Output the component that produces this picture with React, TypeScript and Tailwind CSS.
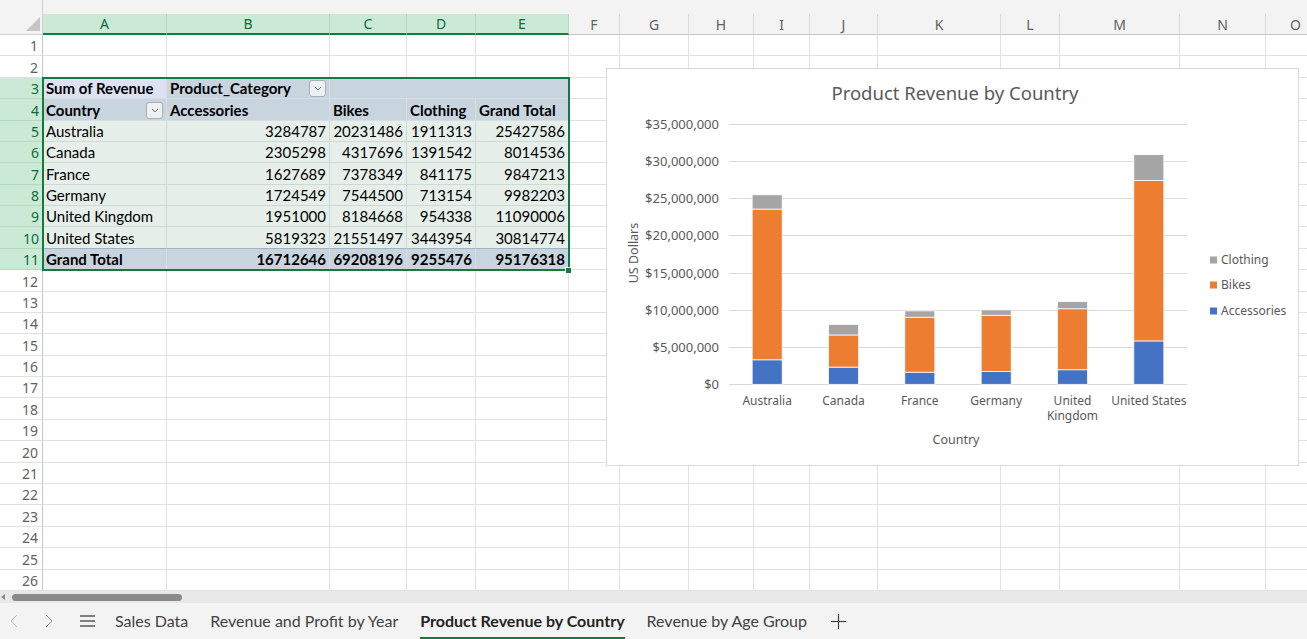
import React from 'react';

const COLS = [
  { k: 'A', w: 'w-[124px]', sel: true },
  { k: 'B', w: 'w-[163px]', sel: true },
  { k: 'C', w: 'w-[77px]', sel: true },
  { k: 'D', w: 'w-[69px]', sel: true },
  { k: 'E', w: 'w-[93px]', sel: true },
  { k: 'F', w: 'w-[51px]', sel: false },
  { k: 'G', w: 'w-[69px]', sel: false },
  { k: 'H', w: 'w-[65px]', sel: false },
  { k: 'I', w: 'w-[56px]', sel: false },
  { k: 'J', w: 'w-[68px]', sel: false },
  { k: 'K', w: 'w-[123px]', sel: false },
  { k: 'L', w: 'w-[59px]', sel: false },
  { k: 'M', w: 'w-[120px]', sel: false },
  { k: 'N', w: 'w-[86px]', sel: false },
  { k: 'O', w: 'w-[60px]', sel: false },
];

const DATA = [
  { name: ['Australia'], a: 3284787, b: 20231486, c: 1911313 },
  { name: ['Canada'], a: 2305298, b: 4317696, c: 1391542 },
  { name: ['France'], a: 1627689, b: 7378349, c: 841175 },
  { name: ['Germany'], a: 1724549, b: 7544500, c: 713154 },
  { name: ['United', 'Kingdom'], a: 1951000, b: 8184668, c: 954338 },
  { name: ['United States'], a: 5819323, b: 21551497, c: 3443954 },
];

const COUNTRY_ROWS = ['Australia', 'Canada', 'France', 'Germany', 'United Kingdom', 'United States'];

const cellFont = { fontFamily: 'Lato, "Liberation Sans", sans-serif' };
const uiFont = { fontFamily: '"Noto Sans", "Open Sans", sans-serif' };

const rowTop = (i: number) => Math.round(35 + i * 21.38);

const Dropdown = () => (
  <div className="w-[17px] h-[17px] shrink-0 mb-[1px] rounded-[3px] border border-[#a9b0b5] bg-[#eef1f3] flex items-center justify-center">
    <svg width="8" height="5" viewBox="0 0 8 5">
      <polyline points="1,1 4,4 7,1" fill="none" stroke="#707070" strokeWidth="1" />
    </svg>
  </div>
);

type Cell = { text?: string; bold?: boolean; right?: boolean; bg?: string; border?: string; drop?: boolean };

function pivotCell(r: number, c: number): Cell | null {
  if (c > 4 || r < 3 || r > 11) return null;
  const head = 'bg-[#c8d5df]';
  const hb = 'border-[#d6dee4]';
  if (r === 3) {
    if (c === 0) return { text: 'Sum of Revenue', bold: true, bg: 'bg-[#dde2f3]', border: hb };
    if (c === 1) return { text: 'Product_Category', bold: true, bg: head, border: hb, drop: true };
    return { bg: head, border: 'border-r-[#c8d5df] border-b-[#d6dee4]' };
  }
  if (r === 4) {
    const t = ['Country', 'Accessories', 'Bikes', 'Clothing', 'Grand Total'][c];
    return { text: t, bold: true, bg: head, border: hb, drop: c === 0 };
  }
  if (r === 11) {
    const t = ['Grand Total', '16712646', '69208196', '9255476', '95176318'][c];
    return { text: t, bold: true, right: c > 0, bg: head, border: 'border-[#d6dee4]' };
  }
  const d = DATA[r - 5];
  const vals = [COUNTRY_ROWS[r - 5], String(d.a), String(d.b), String(d.c), String(d.a + d.b + d.c)];
  return {
    text: vals[c],
    right: c > 0,
    bg: 'bg-[#e6efe9]',
    border: r === 10 ? 'border-r-[#d0d8d3] border-b-[#9fb3c3]' : 'border-[#d0d8d3]',
  };
}

const HeaderRow = () => (
  <div className="flex h-[21px] shrink-0" style={uiFont}>
    <div className="w-[43px] shrink-0 bg-[#f3f3f3] border-r border-b border-[#d0d0d0] relative">
      <svg className="absolute left-0 top-0" width="43" height="21">
        <polygon points="40,3 40,17 26,17" fill="#c6c6c6" />
      </svg>
    </div>
    {COLS.map((col) => (
      <div
        key={col.k}
        className={`${col.w} shrink-0 flex items-center justify-center text-[14px] border-r ${
          col.sel
            ? 'bg-[#caead6] text-[#0f6b38] border-r-[#b5d8c1] border-b-2 border-b-[#107c41]'
            : 'bg-[#f3f3f3] text-[#616161] border-r-[#dadada] border-b border-b-[#c6c6c6]'
        }`}
      >
        {col.k}
      </div>
    ))}
  </div>
);

const Grid = () => {
  const rows = Array.from({ length: 26 }, (_, i) => i + 1);
  return (
    <div className="relative h-[556px] shrink-0 overflow-hidden">
      {rows.map((r) => {
        const h = rowTop(r) - rowTop(r - 1) === 22 ? 'h-[22px]' : 'h-[21px]';
        const sel = r >= 3 && r <= 11;
        return (
          <div key={r} className={`flex ${h}`}>
            <div
              className={`w-[43px] shrink-0 flex items-center justify-end pr-[4px] pt-[1px] text-[14px] border-b ${
                sel
                  ? 'bg-[#caead6] text-[#0f6b38] border-b-[#b5d8c1]'
                  : 'bg-white text-[#616161] border-r border-r-[#c6c6c6] border-b-[#e1e1e1]'
              }`}
              style={uiFont}
            >
              {r}
            </div>
            {COLS.map((col, c) => {
              const p = pivotCell(r, c);
              if (!p) {
                return <div key={col.k} className={`${col.w} shrink-0 border-r border-b border-[#e1e1e1] bg-white`} />;
              }
              return (
                <div
                  key={col.k}
                  className={`${col.w} shrink-0 flex items-end gap-1 px-[3px] whitespace-nowrap overflow-hidden border-r border-b text-[15px] leading-[19px] text-black ${
                    p.bg
                  } ${p.border} ${p.right ? 'justify-end' : 'justify-between'} ${p.bold ? 'font-bold' : ''}`}
                  style={cellFont}
                >
                  <span>{p.text}</span>
                  {p.drop && <Dropdown />}
                </div>
              );
            })}
          </div>
        );
      })}
      {/* selection outline A3:E11 */}
      <div className="absolute left-[42px] top-[42px] w-[528px] h-[194px] border-2 border-[#107c41] pointer-events-none" />
      <div className="absolute left-[565px] top-[232px] w-[7px] h-[7px] bg-[#107c41] border border-white" />
    </div>
  );
};

const Chart = () => {
  const x0 = 123;
  const x1 = 581;
  const y0 = 316.3;
  const per = 260.8 / 35000000;
  const cw = (x1 - x0) / 6;
  const ticks = [0, 5, 10, 15, 20, 25, 30, 35];
  const font = '"Noto Sans", "Open Sans", sans-serif';
  return (
    <div className="absolute left-[606px] top-[68px] w-[693px] h-[398px] bg-white border border-[#d9d9d9]">
      <svg width="691" height="396" className="block">
        <g transform="translate(-1,-1)">
          <text x="349" y="32" textAnchor="middle" fontSize="18.5" fill="#595959" fontFamily={font}>
            Product Revenue by Country
          </text>
          {ticks.map((t) => {
            const y = Math.round(y0 - t * 1000000 * per) + 0.5;
            return (
              <g key={t}>
                <line x1={x0} x2={x1} y1={y} y2={y} stroke="#d9d9d9" strokeWidth="1" />
                <text x="113" y={y + 4.5} textAnchor="end" fontSize="13" fill="#595959" fontFamily={font}>
                  {t === 0 ? '$0' : `$${t},000,000`}
                </text>
              </g>
            );
          })}
          {DATA.map((d, i) => {
            const cx = x0 + cw * (i + 0.5);
            const bx = cx - 15;
            const ha = d.a * per;
            const hb = d.b * per;
            const hc = d.c * per;
            return (
              <g key={i}>
                <rect x={bx} y={y0 - ha} width="30" height={ha} fill="#4472c4" stroke="#ffffff" strokeWidth="0.75" />
                <rect x={bx} y={y0 - ha - hb} width="30" height={hb} fill="#ed7d31" stroke="#ffffff" strokeWidth="0.75" />
                <rect x={bx} y={y0 - ha - hb - hc} width="30" height={hc} fill="#a5a5a5" stroke="#ffffff" strokeWidth="0.75" />
                {d.name.map((n, j) => (
                  <text key={n} x={cx} y={337 + j * 15} textAnchor="middle" fontSize="12" fill="#595959" fontFamily={font}>
                    {n}
                  </text>
                ))}
              </g>
            );
          })}
          <text x="350" y="376" textAnchor="middle" fontSize="12.5" fill="#595959" fontFamily={font}>
            Country
          </text>
          <text
            x="32"
            y="185"
            textAnchor="middle"
            fontSize="12.5"
            fill="#595959"
            fontFamily={font}
            transform="rotate(-90 32 185)"
          >
            US Dollars
          </text>
          {[
            { t: 'Clothing', c: '#a5a5a5', y: 192 },
            { t: 'Bikes', c: '#ed7d31', y: 217 },
            { t: 'Accessories', c: '#4472c4', y: 243 },
          ].map((l) => (
            <g key={l.t}>
              <rect x="604" y={l.y - 3.5} width="7" height="7" fill={l.c} />
              <text x="615" y={l.y + 4} fontSize="12" fill="#595959" fontFamily={font}>
                {l.t}
              </text>
            </g>
          ))}
        </g>
      </svg>
    </div>
  );
};

const ScrollBar = () => (
  <div className="h-[12px] shrink-0 bg-[#e8e8e8] flex items-center">
    <svg width="10" height="12" className="shrink-0">
      <polygon points="1,6 5,3 5,9" fill="#8a8a8a" />
    </svg>
    <div className="ml-[2px] w-[170px] h-[7px] rounded-full bg-[#8a8a8a]" />
  </div>
);

const tabs = ['Sales Data', 'Revenue and Profit by Year', 'Product Revenue by Country', 'Revenue by Age Group'];

const Tabs = () => (
  <div className="h-[36px] shrink-0 bg-[#f3f3f3] flex items-stretch text-[16px] text-[#424242]" style={cellFont}>
    <div className="w-[28px] flex items-center justify-center">
      <svg width="8" height="14" viewBox="0 0 8 14">
        <polyline points="7,1 1,7 7,13" fill="none" stroke="#c2c2c2" strokeWidth="1" />
      </svg>
    </div>
    <div className="w-[42px] flex items-center justify-center">
      <svg width="8" height="14" viewBox="0 0 8 14">
        <polyline points="1,1 7,7 1,13" fill="none" stroke="#8f8f8f" strokeWidth="1" />
      </svg>
    </div>
    <div className="w-[34px] flex items-center justify-center">
      <svg width="15" height="12" viewBox="0 0 15 12">
        <line x1="0" x2="15" y1="1" y2="1" stroke="#424242" strokeWidth="1.3" />
        <line x1="0" x2="15" y1="6" y2="6" stroke="#424242" strokeWidth="1.3" />
        <line x1="0" x2="15" y1="11" y2="11" stroke="#424242" strokeWidth="1.3" />
      </svg>
    </div>
    {tabs.map((t) => {
      const active = t === 'Product Revenue by Country';
      return (
        <div key={t} className="px-[11px] flex">
          <div
            className={`flex items-center pt-[2px] border-b-2 whitespace-nowrap ${
              active ? 'border-[#107c41] font-bold text-[#242424]' : 'border-transparent'
            }`}
          >
            {t}
          </div>
        </div>
      );
    })}
    <div className="px-[13px] flex items-center">
      <svg width="15" height="15" viewBox="0 0 15 15">
        <line x1="7.5" x2="7.5" y1="0" y2="15" stroke="#424242" strokeWidth="1.2" />
        <line x1="0" x2="15" y1="7.5" y2="7.5" stroke="#424242" strokeWidth="1.2" />
      </svg>
    </div>
  </div>
);

export default function App() {
  return (
    <div className="relative w-[1307px] h-[639px] overflow-hidden bg-white flex flex-col">
      <div className="h-[14px] shrink-0 bg-[#f3f3f3] flex">
        <div className="w-[43px] border-r border-[#d0d0d0]" />
      </div>
      <HeaderRow />
      <Grid />
      <ScrollBar />
      <Tabs />
      <Chart />
    </div>
  );
}
